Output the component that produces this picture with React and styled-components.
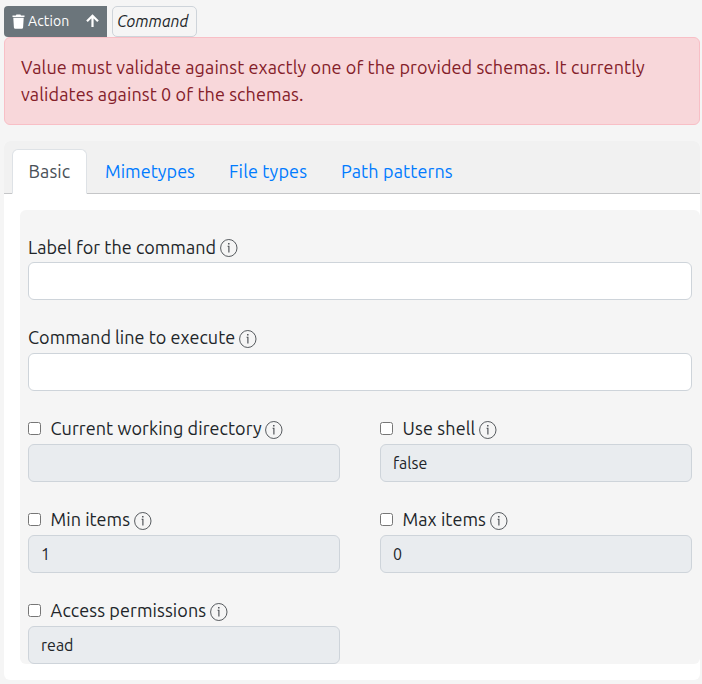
import React from 'react';
import styled, { createGlobalStyle } from 'styled-components';

const GlobalStyle = createGlobalStyle`
  * { box-sizing: border-box; }
  body {
    margin: 0;
    background: #f5f5f5;
    color: #212529;
    font-family: "Ubuntu", "Noto Sans", sans-serif;
    font-size: 18px;
    line-height: 27px;
  }
`;

const Page = styled.main`
  width: 702px;
  height: 684px;
  padding: 6px 2px 4px 4px;
`;

const Toolbar = styled.header`
  display: flex;
  height: 31px;
  gap: 5px;
`;

const ButtonGroup = styled.div`
  display: flex;
  width: 103px;
  background: #6b757b;
  border-radius: 4px 0 0 4px;
`;

const ToolButton = styled.button`
  display: flex;
  align-items: center;
  gap: 3px;
  width: ${(p) => p.$width}px;
  padding: 0 0 1px 8px;
  border: 0;
  background: transparent;
  color: #fff;
  font: 14px/21px "Ubuntu", "Noto Sans", sans-serif;
  letter-spacing: 0.1px;
`;

const TypeBadge = styled.span`
  width: 85px;
  height: 31px;
  padding-left: 4px;
  border: 1px solid #ced4da;
  border-radius: 5px;
  color: #212529;
  font-size: 16px;
  line-height: 28px;
  font-style: italic;
  white-space: nowrap;
`;

const Alert = styled.div`
  height: 88px;
  padding: 16px 16px 15px;
  border: 1px solid #f8bfc6;
  border-radius: 6px;
  background: #f8d7da;
  color: #842029;
`;

const Line = styled.div`
  letter-spacing: ${(p) => p.$tracking || 0}px;
  white-space: nowrap;
`;

const Card = styled.section`
  margin-top: 16px;
  border-radius: 6px;
  background: #fff;
`;

const TabBar = styled.nav`
  display: flex;
  align-items: flex-end;
  gap: 1px;
  height: 53px;
  padding: 0 8px;
  border-bottom: 1px solid #c5c6c8;
  border-radius: 6px 6px 0 0;
  background: #f1f1f1;
`;

const Tab = styled.a`
  width: ${(p) => p.$width}px;
  height: 45px;
  margin-bottom: -1px;
  padding: 8px 0 0 ${(p) => (p.$active ? 15.5 : 16)}px;
  border: 1px solid ${(p) => (p.$active ? '#dee2e6' : 'transparent')};
  border-bottom-color: ${(p) => (p.$active ? '#fff' : 'transparent')};
  border-radius: 6px 6px 0 0;
  background: ${(p) => (p.$active ? '#fff' : 'transparent')};
  color: ${(p) => (p.$active ? '#495057' : '#007bff')};
  letter-spacing: ${(p) => p.$tracking || 0}px;
  line-height: 26px;
  white-space: nowrap;
`;

const CardBody = styled.div`
  padding: 16px 0 16px 16px;
`;

const Panel = styled.form`
  display: grid;
  grid-template-columns: 312px 312px;
  column-gap: 40px;
  row-gap: 26px;
  padding: 25px 8px 0;
  border-radius: 6px;
  background: #f5f5f5;
`;

const LabelText = styled.span`
  width: ${(p) => p.$width}px;
  letter-spacing: ${(p) => p.$tracking || 0}px;
  line-height: 22px;
`;

const Field = styled.div`
  grid-column: ${(p) => (p.$wide ? '1 / -1' : 'auto')};

  &:first-child ${LabelText} {
    line-height: 24px;
  }
`;

const Label = styled.label`
  display: flex;
  height: 27px;
  white-space: nowrap;
`;

const Checkbox = styled.input`
  width: 13px;
  height: 13px;
  margin: 5px 9.6px 0 0;
`;

const Input = styled.input`
  display: block;
  width: 100%;
  height: 38px;
  padding: 0 12px;
  border: 1px solid #ced4da;
  border-radius: 6px;
  background: ${(p) => (p.disabled ? '#e9ecef' : '#fff')};
  color: #212529;
  font: 16px/24px "Ubuntu", "Noto Sans", sans-serif;
`;

const InfoSvg = styled.svg`
  flex: none;
  margin-top: 4px;
`;

const InfoIcon = () => (
  <InfoSvg width="18" height="18" viewBox="0 0 18 18" fill="none" stroke="#45494e">
    <ellipse cx="8.8" cy="9" rx="8.2" ry="8.5" strokeWidth="0.9" />
    <path d="M7.6 7.2H8.9V13.5" strokeWidth="1.1" />
    <path d="M8.8 4.1V5.5" strokeWidth="1.4" />
  </InfoSvg>
);

const TrashIcon = () => (
  <svg width="13" height="15" viewBox="0 0 13 15" fill="#fff">
    <path d="M.5 1.5h3.3L4.4.5h4l.6 1h3.5v1.4H.5zM1.3 3.8h10.4l-.6 9.7a1.4 1.4 0 0 1-1.4 1.2H3.3a1.4 1.4 0 0 1-1.4-1.2z" />
  </svg>
);

const ArrowUpIcon = () => (
  <svg width="13" height="14" viewBox="0 0 13 14" fill="none" stroke="#fff" strokeWidth="2.2">
    <path d="M6.5 13V2M1 7.3 6.5 1.8 12 7.3" />
  </svg>
);

const tabs = [
  { text: 'Basic', width: 75, tracking: 0.1, active: true },
  { text: 'Mimetypes', width: 123, tracking: 0.05 },
  { text: 'File types', width: 111, tracking: 0.15 },
  { text: 'Path patterns', width: 146, tracking: 0.13 },
];

const fields = [
  { text: 'Label for the command', width: 192, tracking: 0.03, wide: true },
  { text: 'Command line to execute', width: 210.5, tracking: 0.04, wide: true },
  { text: 'Current working directory', width: 214.5, tracking: 0.08, optional: true, value: '' },
  { text: 'Use shell', width: 76, tracking: 0.13, optional: true, value: 'false' },
  { text: 'Min items', width: 83, tracking: 0.03, optional: true, value: '1' },
  { text: 'Max items', width: 87, tracking: 0.05, optional: true, value: '0' },
  { text: 'Access permissions', width: 159.5, tracking: 0.1, optional: true, value: 'read' },
];

export default function App() {
  return (
    <Page>
      <GlobalStyle />
      <Toolbar>
        <ButtonGroup>
          <ToolButton type="button" $width={74}><TrashIcon />Action</ToolButton>
          <ToolButton type="button" $width={29} aria-label="Move up"><ArrowUpIcon /></ToolButton>
        </ButtonGroup>
        <TypeBadge>Command</TypeBadge>
      </Toolbar>
      <Alert role="alert">
        <Line $tracking={0.1}>Value must validate against exactly one of the provided schemas. It currently</Line>
        <Line $tracking={0.1}>validates against 0 of the schemas.</Line>
      </Alert>
      <Card>
        <TabBar>
          {tabs.map((t) => (
            <Tab key={t.text} $width={t.width} $tracking={t.tracking} $active={t.active}>{t.text}</Tab>
          ))}
        </TabBar>
        <CardBody>
          <Panel>
            {fields.map((f) => (
              <Field key={f.text} $wide={f.wide}>
                <Label>
                  {f.optional && <Checkbox type="checkbox" />}
                  <LabelText $width={f.width} $tracking={f.tracking}>{f.text}</LabelText>
                  <InfoIcon />
                </Label>
                <Input type="text" defaultValue={f.value} disabled={f.optional} />
              </Field>
            ))}
          </Panel>
        </CardBody>
      </Card>
    </Page>
  );
}
